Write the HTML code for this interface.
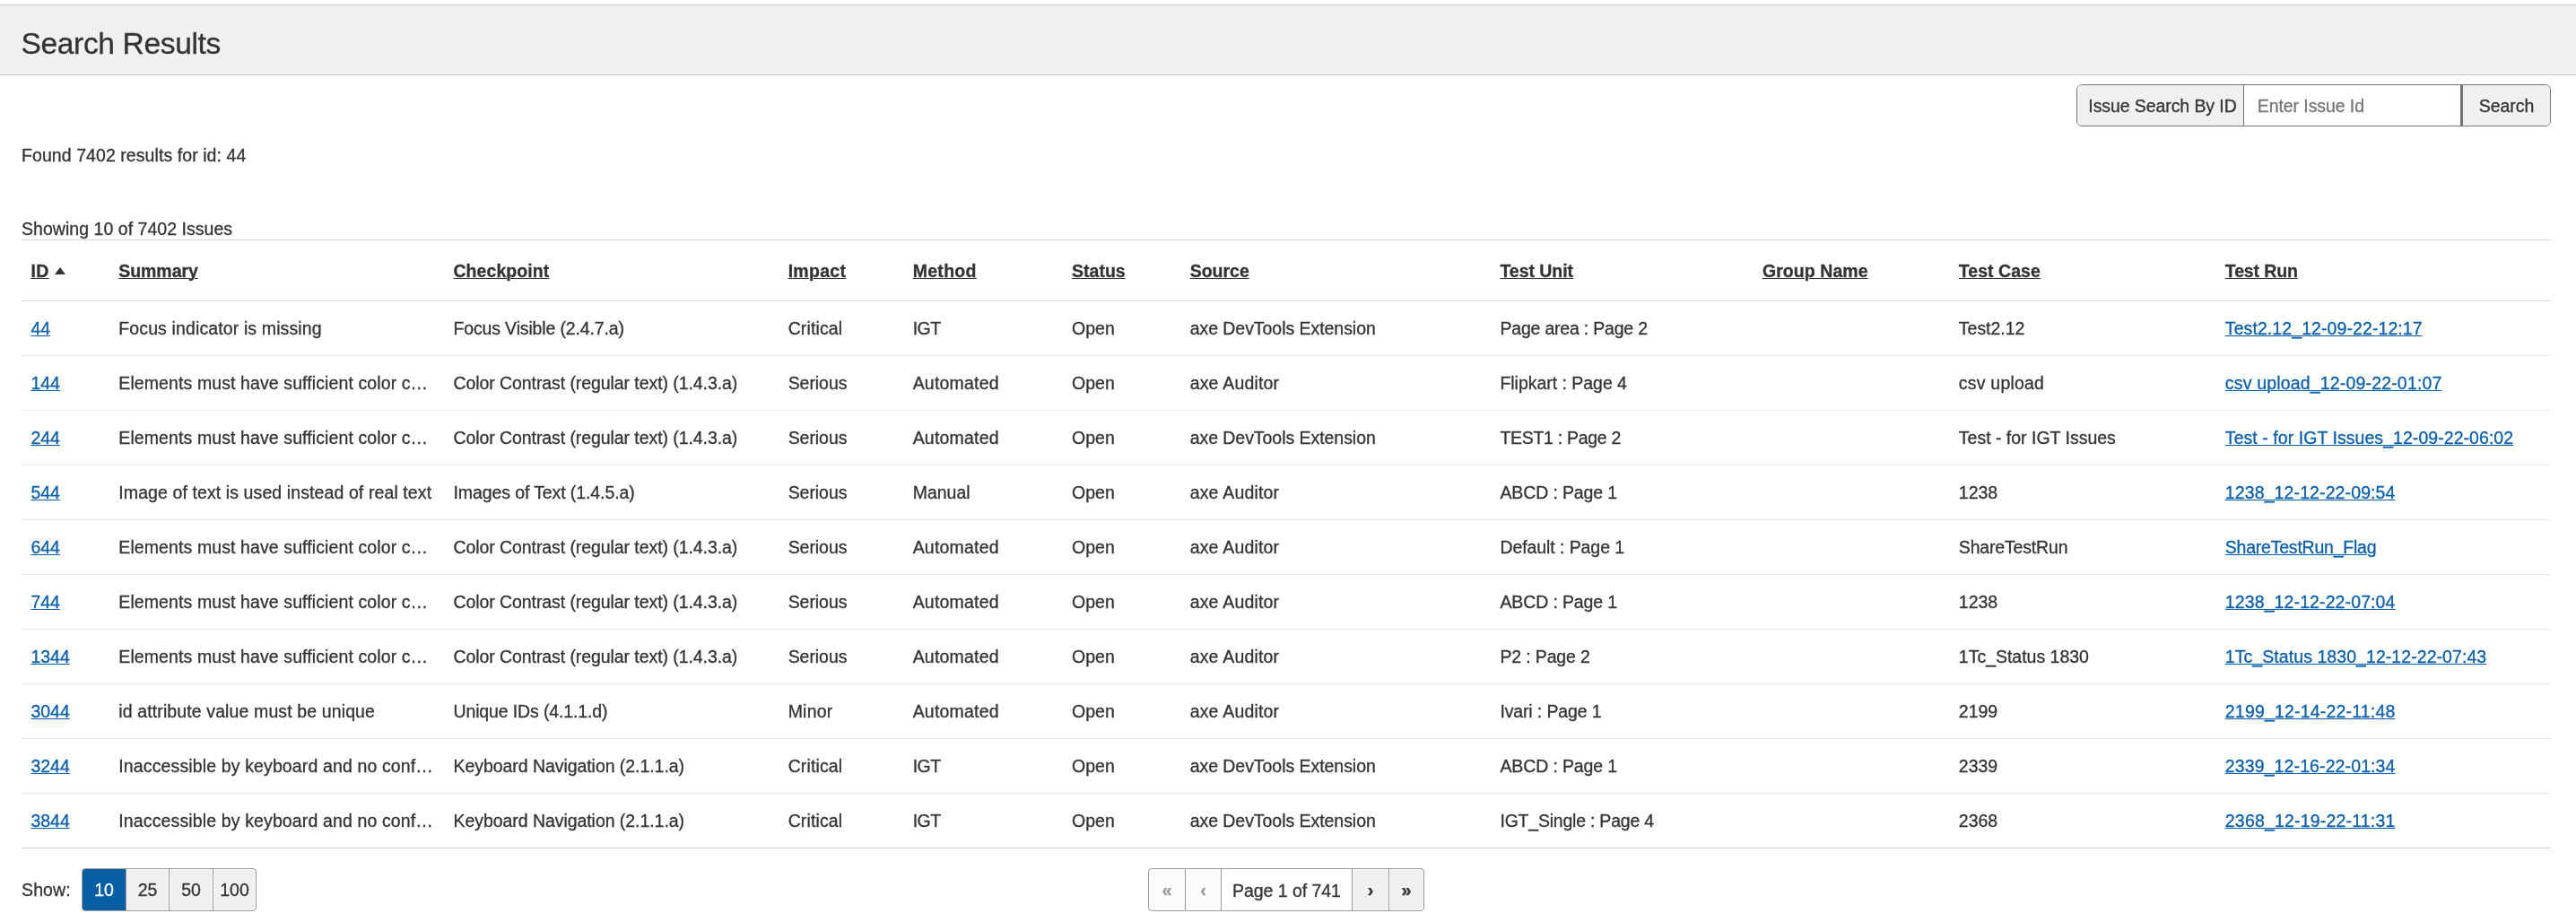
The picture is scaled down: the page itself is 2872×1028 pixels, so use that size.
<!DOCTYPE html><html lang="en"><head><meta charset="utf-8"><title>Search Results</title><style>
*{box-sizing:border-box}
html,body{margin:0;padding:0;background:#fff}
body{width:2872px;height:1028px;position:relative;overflow:hidden;font-family:"Liberation Sans",sans-serif;font-size:19.5px;color:#333;line-height:28px;-webkit-text-stroke:0.3px currentColor}
.root{position:absolute;left:0;top:0;width:2872px;height:1028px;will-change:transform}
a{color:#0b5ea8;text-decoration:underline;text-underline-offset:1px;text-decoration-thickness:1px}
.hdr{position:absolute;left:0;top:5px;width:2872px;height:79px;background:#f0f0f0;border-top:1px solid #ccc;border-bottom:1px solid #ccc}
.hdr h1{position:absolute;left:23.5px;top:19.8px;margin:0;font-weight:normal;font-size:33.6px;line-height:46px;color:#333;white-space:nowrap}
.sg{position:absolute;left:2315px;top:94px;width:529px;height:47px;border:1px solid #747474;border-radius:6px;background:#fff;overflow:hidden}
.sg>div{position:absolute;top:0;height:45px;line-height:47px;white-space:nowrap}
.sg .lab{left:0;width:186px;background:#f0f0f0;border-right:1px solid #747474;padding-left:12.3px}
.sg .inp{left:186px;width:241px;color:#757575;padding-left:14.8px}
.sg .btn{left:427px;width:100px;background:#f0f0f0;border-left:3px solid #747474;text-align:center}
.found{position:absolute;left:24px;top:159px;white-space:nowrap}
.showing{position:absolute;left:24px;top:241px;white-space:nowrap}
table{position:absolute;left:24px;top:267px;width:2820px;table-layout:fixed;border-collapse:separate;border-spacing:0}
th,td{padding:0 0 0 10.4px;text-align:left;white-space:nowrap;overflow:hidden;vertical-align:top}
thead th{height:69px;border-top:1px solid #d9d9d9;border-bottom:1px solid #d6d6d6;font-weight:bold;line-height:66px;padding-top:1px}
thead th span{text-decoration:underline;text-underline-offset:1px;text-decoration-thickness:1px}
tbody td{height:61px;border-bottom:1px solid #e9e9e9;line-height:60px}
tbody tr:last-child td{border-bottom:1px solid #ccc}
.arrow{display:inline-block;width:0;height:0;border-left:6px solid transparent;border-right:6px solid transparent;border-bottom:8px solid #333;margin-left:6.1px;position:relative;top:-3.5px}
.show{position:absolute;left:24px;top:978px;white-space:nowrap}
.bg{position:absolute;top:968px;height:48px;display:flex}
.bg>div{height:48px;border:1px solid #999;border-left-width:0;line-height:46px;text-align:center;background:#f0f0f0;white-space:nowrap;box-shadow:inset 0 0 0 1px rgba(255,255,255,.55)}
.bg>div:first-child{border-left-width:1px;border-radius:4.5px 0 0 4.5px}
.bg>div:last-child{border-radius:0 4.5px 4.5px 0}
.sz{left:91px}
.sz .on{background:#085fa6;color:#fff;border-color:#a8a29c;border-right-color:#999;box-shadow:none}
.pg{left:1280px}
.pg>div{line-height:49.5px}
.pg .ar{font-weight:bold;font-size:20px;line-height:47px}
.pg .dis{background:#fcfcfc;color:#9a9a9a;box-shadow:none}
.pg .cur{background:#fff;box-shadow:none}
</style></head><body><div class="root">
<div class="hdr"><h1 style="letter-spacing:-0.374px">Search Results</h1></div>
<div class="sg"><div class="lab"><span style="letter-spacing:-0.084px">Issue Search By ID</span></div><div class="inp"><span style="letter-spacing:-0.082px">Enter Issue Id</span></div><div class="btn"><span style="letter-spacing:-0.068px">Search</span></div></div>
<div class="found"><span style="letter-spacing:0.072px">Found 7402 results for id: 44</span></div>
<div class="showing"><span style="letter-spacing:0.038px">Showing 10 of 7402 Issues</span></div>
<table><colgroup><col style="width:97.90px"><col style="width:373.20px"><col style="width:373.20px"><col style="width:139.00px"><col style="width:177.40px"><col style="width:131.60px"><col style="width:345.80px"><col style="width:292.50px"><col style="width:218.90px"><col style="width:297.00px"><col style="width:373.50px"></colgroup><thead><tr>
<th><span style="letter-spacing:0.351px">ID</span><i class="arrow"></i></th>
<th><span style="letter-spacing:-0.060px">Summary</span></th>
<th><span style="letter-spacing:0.069px">Checkpoint</span></th>
<th><span style="letter-spacing:0.287px">Impact</span></th>
<th><span style="letter-spacing:0.301px">Method</span></th>
<th><span style="letter-spacing:0.000px">Status</span></th>
<th><span style="letter-spacing:-0.001px">Source</span></th>
<th><span style="letter-spacing:-0.040px">Test Unit</span></th>
<th><span style="letter-spacing:0.067px">Group Name</span></th>
<th><span style="letter-spacing:0.038px">Test Case</span></th>
<th><span style="letter-spacing:-0.132px">Test Run</span></th>
</tr></thead><tbody>
<tr>
<td><a style="letter-spacing:-0.010px">44</a></td>
<td><span style="letter-spacing:0.123px">Focus indicator is missing</span></td>
<td><span style="letter-spacing:-0.144px">Focus Visible (2.4.7.a)</span></td>
<td><span style="letter-spacing:0.131px">Critical</span></td>
<td><span style="letter-spacing:-0.485px">IGT</span></td>
<td><span style="letter-spacing:-0.002px">Open</span></td>
<td><span style="letter-spacing:-0.045px">axe DevTools Extension</span></td>
<td><span style="letter-spacing:-0.201px">Page area : Page 2</span></td>
<td></td>
<td><span style="letter-spacing:-0.021px">Test2.12</span></td>
<td><a style="letter-spacing:0.086px">Test2.12_12-09-22-12:17</a></td>
</tr>
<tr>
<td><a style="letter-spacing:-0.007px">144</a></td>
<td><span style="letter-spacing:0.103px">Elements must have sufficient color c…</span></td>
<td><span style="letter-spacing:-0.077px">Color Contrast (regular text) (1.4.3.a)</span></td>
<td><span style="letter-spacing:-0.059px">Serious</span></td>
<td><span style="letter-spacing:0.198px">Automated</span></td>
<td><span style="letter-spacing:-0.002px">Open</span></td>
<td><span style="letter-spacing:0.190px">axe Auditor</span></td>
<td><span style="letter-spacing:-0.031px">Flipkart : Page 4</span></td>
<td></td>
<td><span style="letter-spacing:0.212px">csv upload</span></td>
<td><a style="letter-spacing:0.171px">csv upload_12-09-22-01:07</a></td>
</tr>
<tr>
<td><a style="letter-spacing:-0.007px">244</a></td>
<td><span style="letter-spacing:0.103px">Elements must have sufficient color c…</span></td>
<td><span style="letter-spacing:-0.077px">Color Contrast (regular text) (1.4.3.a)</span></td>
<td><span style="letter-spacing:-0.059px">Serious</span></td>
<td><span style="letter-spacing:0.198px">Automated</span></td>
<td><span style="letter-spacing:-0.002px">Open</span></td>
<td><span style="letter-spacing:-0.045px">axe DevTools Extension</span></td>
<td><span style="letter-spacing:-0.297px">TEST1 : Page 2</span></td>
<td></td>
<td><span style="letter-spacing:-0.009px">Test - for IGT Issues</span></td>
<td><a style="letter-spacing:0.054px">Test - for IGT Issues_12-09-22-06:02</a></td>
</tr>
<tr>
<td><a style="letter-spacing:-0.007px">544</a></td>
<td><span style="letter-spacing:0.100px">Image of text is used instead of real text</span></td>
<td><span style="letter-spacing:-0.099px">Images of Text (1.4.5.a)</span></td>
<td><span style="letter-spacing:-0.059px">Serious</span></td>
<td><span style="letter-spacing:-0.005px">Manual</span></td>
<td><span style="letter-spacing:-0.002px">Open</span></td>
<td><span style="letter-spacing:0.190px">axe Auditor</span></td>
<td><span style="letter-spacing:-0.125px">ABCD : Page 1</span></td>
<td></td>
<td><span style="letter-spacing:-0.006px">1238</span></td>
<td><a style="letter-spacing:0.112px">1238_12-12-22-09:54</a></td>
</tr>
<tr>
<td><a style="letter-spacing:-0.007px">644</a></td>
<td><span style="letter-spacing:0.103px">Elements must have sufficient color c…</span></td>
<td><span style="letter-spacing:-0.077px">Color Contrast (regular text) (1.4.3.a)</span></td>
<td><span style="letter-spacing:-0.059px">Serious</span></td>
<td><span style="letter-spacing:0.198px">Automated</span></td>
<td><span style="letter-spacing:-0.002px">Open</span></td>
<td><span style="letter-spacing:0.190px">axe Auditor</span></td>
<td><span style="letter-spacing:-0.080px">Default : Page 1</span></td>
<td></td>
<td><span style="letter-spacing:-0.168px">ShareTestRun</span></td>
<td><a style="letter-spacing:-0.227px">ShareTestRun_Flag</a></td>
</tr>
<tr>
<td><a style="letter-spacing:-0.007px">744</a></td>
<td><span style="letter-spacing:0.103px">Elements must have sufficient color c…</span></td>
<td><span style="letter-spacing:-0.077px">Color Contrast (regular text) (1.4.3.a)</span></td>
<td><span style="letter-spacing:-0.059px">Serious</span></td>
<td><span style="letter-spacing:0.198px">Automated</span></td>
<td><span style="letter-spacing:-0.002px">Open</span></td>
<td><span style="letter-spacing:0.190px">axe Auditor</span></td>
<td><span style="letter-spacing:-0.125px">ABCD : Page 1</span></td>
<td></td>
<td><span style="letter-spacing:-0.006px">1238</span></td>
<td><a style="letter-spacing:0.112px">1238_12-12-22-07:04</a></td>
</tr>
<tr>
<td><a style="letter-spacing:-0.006px">1344</a></td>
<td><span style="letter-spacing:0.103px">Elements must have sufficient color c…</span></td>
<td><span style="letter-spacing:-0.077px">Color Contrast (regular text) (1.4.3.a)</span></td>
<td><span style="letter-spacing:-0.059px">Serious</span></td>
<td><span style="letter-spacing:0.198px">Automated</span></td>
<td><span style="letter-spacing:-0.002px">Open</span></td>
<td><span style="letter-spacing:0.190px">axe Auditor</span></td>
<td><span style="letter-spacing:-0.148px">P2 : Page 2</span></td>
<td></td>
<td><span style="letter-spacing:-0.013px">1Tc_Status 1830</span></td>
<td><a style="letter-spacing:0.065px">1Tc_Status 1830_12-12-22-07:43</a></td>
</tr>
<tr>
<td><a style="letter-spacing:-0.006px">3044</a></td>
<td><span style="letter-spacing:0.118px">id attribute value must be unique</span></td>
<td><span style="letter-spacing:-0.128px">Unique IDs (4.1.1.d)</span></td>
<td><span style="letter-spacing:0.215px">Minor</span></td>
<td><span style="letter-spacing:0.198px">Automated</span></td>
<td><span style="letter-spacing:-0.002px">Open</span></td>
<td><span style="letter-spacing:0.190px">axe Auditor</span></td>
<td><span style="letter-spacing:-0.143px">Ivari : Page 1</span></td>
<td></td>
<td><span style="letter-spacing:-0.006px">2199</span></td>
<td><a style="letter-spacing:0.188px">2199_12-14-22-11:48</a></td>
</tr>
<tr>
<td><a style="letter-spacing:-0.006px">3244</a></td>
<td><span style="letter-spacing:0.133px">Inaccessible by keyboard and no conf…</span></td>
<td><span style="letter-spacing:-0.054px">Keyboard Navigation (2.1.1.a)</span></td>
<td><span style="letter-spacing:0.131px">Critical</span></td>
<td><span style="letter-spacing:-0.485px">IGT</span></td>
<td><span style="letter-spacing:-0.002px">Open</span></td>
<td><span style="letter-spacing:-0.045px">axe DevTools Extension</span></td>
<td><span style="letter-spacing:-0.125px">ABCD : Page 1</span></td>
<td></td>
<td><span style="letter-spacing:-0.006px">2339</span></td>
<td><a style="letter-spacing:0.112px">2339_12-16-22-01:34</a></td>
</tr>
<tr>
<td><a style="letter-spacing:-0.006px">3844</a></td>
<td><span style="letter-spacing:0.133px">Inaccessible by keyboard and no conf…</span></td>
<td><span style="letter-spacing:-0.054px">Keyboard Navigation (2.1.1.a)</span></td>
<td><span style="letter-spacing:0.131px">Critical</span></td>
<td><span style="letter-spacing:-0.485px">IGT</span></td>
<td><span style="letter-spacing:-0.002px">Open</span></td>
<td><span style="letter-spacing:-0.045px">axe DevTools Extension</span></td>
<td><span style="letter-spacing:-0.221px">IGT_Single : Page 4</span></td>
<td></td>
<td><span style="letter-spacing:-0.006px">2368</span></td>
<td><a style="letter-spacing:0.188px">2368_12-19-22-11:31</a></td>
</tr>
</tbody></table>
<div class="show"><span style="letter-spacing:0.134px">Show:</span></div>
<div class="bg sz"><div class="on" style="width:50px"><span style="letter-spacing:-0.010px">10</span></div><div style="width:48px"><span style="letter-spacing:-0.010px">25</span></div><div style="width:49px"><span style="letter-spacing:-0.010px">50</span></div><div style="width:48px"><span style="letter-spacing:-0.007px">100</span></div></div>
<div class="bg pg"><div class="dis ar" style="width:42px">«</div><div class="dis ar" style="width:40px">‹</div><div class="cur" style="width:146px"><span style="letter-spacing:-0.043px">Page 1 of 741</span></div><div class="ar" style="width:41px">›</div><div class="ar" style="width:39px">»</div></div>
</div></body></html>
